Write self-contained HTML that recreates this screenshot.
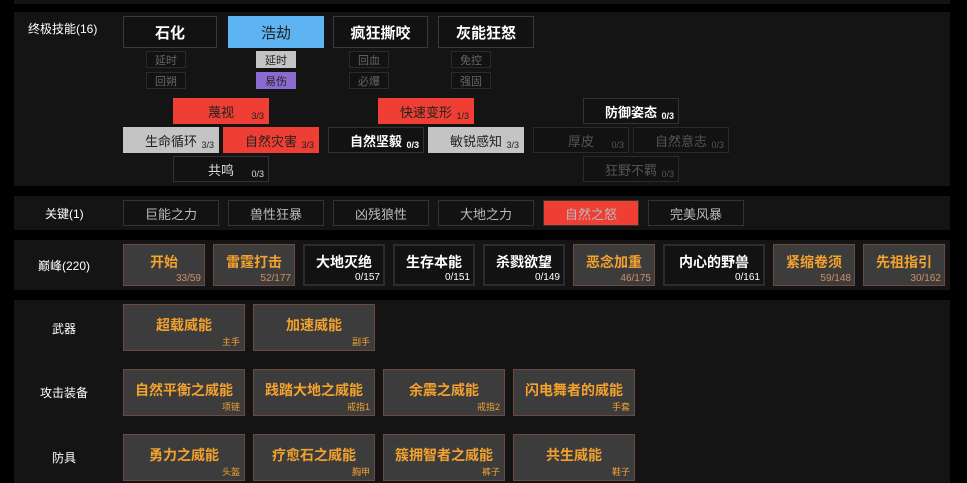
<!DOCTYPE html><html><head><meta charset="utf-8"><style>
*{margin:0;padding:0;box-sizing:border-box}
body{width:967px;height:483px;background:#000;position:relative;overflow:hidden;font-family:"Liberation Sans","Noto Sans CJK SC",sans-serif;color:#fff}
.p{position:absolute;left:14px;width:936px;background:#141414}
.b{position:absolute;display:flex;align-items:center;justify-content:center;font-size:13px;border:1px solid #333;background:#121212}
.lab{position:absolute;font-size:12px;color:#fff}
.u{font-size:15px;font-weight:bold;border:1px solid #3a3a3a}
.s{font-size:11px;color:#666;border:1px solid #2a2a2a;width:40px;height:17px}
.t{width:96px;height:26px;font-size:13px}
.t i{position:absolute;right:4px;bottom:2px;font-style:normal;font-size:9px}
.red{background:#ef3e33;border-color:#ef3e33;color:#222}
.gray{background:#c4c4c4;border-color:#c4c4c4;color:#222}
.dim{color:#555;border-color:#2a2a2a}
.k{width:96px;height:26px;font-size:13px;color:#bbb;border:1px solid #333}
.pk{top:244px;height:42px;width:82px;font-size:14px;font-weight:bold;padding-bottom:6px}
.pk i{position:absolute;right:3px;bottom:1px;font-style:normal;font-size:10px;font-weight:normal}
.o{background:#3c3c3c;border:1px solid #6d4a40;color:#f4a22e}
.o i{color:#d09060}
.d{background:#121212;border:2px solid #2c2c2c;color:#fff}
.lg{width:122px;height:47px;font-size:14px;font-weight:bold;padding-bottom:6px}
.lg i{position:absolute;right:4px;bottom:2px;font-style:normal;font-size:9px;font-weight:normal;color:#f4a22e}
</style></head><body>
<div class="p" style="top:0;height:4px"></div>
<div class="p" style="top:12px;height:174px"></div>
<div class="p" style="top:196px;height:34px"></div>
<div class="p" style="top:240px;height:50px"></div>
<div class="p" style="top:300px;height:183px"></div>

<div class="lab" style="left:28px;top:20px">终极技能(16)</div>
<div class="b u" style="left:123px;top:16px;width:94px;height:32px">石化</div>
<div class="b u" style="left:228px;top:16px;width:96px;height:32px;background:#5eb3f2;border-color:#5eb3f2;color:#222;font-weight:normal">浩劫</div>
<div class="b u" style="left:333px;top:16px;width:95px;height:32px">疯狂撕咬</div>
<div class="b u" style="left:438px;top:16px;width:96px;height:32px">灰能狂怒</div>
<div class="b s" style="left:146px;top:51px">延时</div><div class="b s" style="left:146px;top:72px">回朔</div>
<div class="b s" style="left:256px;top:51px;background:#c4c4c4;color:#222;border-color:#c4c4c4">延时</div><div class="b s" style="left:256px;top:72px;background:#8b6bd0;color:#222;border-color:#8b6bd0">易伤</div>
<div class="b s" style="left:349px;top:51px">回血</div><div class="b s" style="left:349px;top:72px">必爆</div>
<div class="b s" style="left:451px;top:51px">免控</div><div class="b s" style="left:451px;top:72px">强固</div>

<div class="b t red" style="left:173px;top:98px">蔑视<i>3/3</i></div>
<div class="b t gray" style="left:123px;top:127px">生命循环<i>3/3</i></div>
<div class="b t red" style="left:223px;top:127px">自然灾害<i>3/3</i></div>
<div class="b t" style="left:173px;top:156px;color:#ddd">共鸣<i>0/3</i></div>
<div class="b t red" style="left:378px;top:98px">快速变形<i>1/3</i></div>
<div class="b t" style="left:328px;top:127px;font-weight:bold">自然坚毅<i>0/3</i></div>
<div class="b t gray" style="left:428px;top:127px">敏锐感知<i>3/3</i></div>
<div class="b t" style="left:583px;top:98px;font-weight:bold">防御姿态<i>0/3</i></div>
<div class="b t dim" style="left:533px;top:127px">厚皮<i>0/3</i></div>
<div class="b t dim" style="left:633px;top:127px">自然意志<i>0/3</i></div>
<div class="b t dim" style="left:583px;top:156px">狂野不羁<i>0/3</i></div>

<div class="lab" style="left:45px;top:205px">关键(1)</div>
<div class="b k" style="left:123px;top:200px">巨能之力</div>
<div class="b k" style="left:228px;top:200px">兽性狂暴</div>
<div class="b k" style="left:333px;top:200px">凶残狼性</div>
<div class="b k" style="left:438px;top:200px">大地之力</div>
<div class="b k red" style="left:543px;top:200px">自然之怒</div>
<div class="b k" style="left:648px;top:200px">完美风暴</div>

<div class="lab" style="left:38px;top:257px">巅峰(220)</div>
<div class="b pk o" style="left:123px">开始<i>33/59</i></div>
<div class="b pk o" style="left:213px">雷霆打击<i>52/177</i></div>
<div class="b pk d" style="left:303px">大地灭绝<i>0/157</i></div>
<div class="b pk d" style="left:393px">生存本能<i>0/151</i></div>
<div class="b pk d" style="left:483px">杀戮欲望<i>0/149</i></div>
<div class="b pk o" style="left:573px">恶念加重<i>46/175</i></div>
<div class="b pk d" style="left:663px;width:102px">内心的野兽<i>0/161</i></div>
<div class="b pk o" style="left:773px">紧缩卷须<i>59/148</i></div>
<div class="b pk o" style="left:863px">先祖指引<i>30/162</i></div>

<div class="lab" style="left:52px;top:320px">武器</div>
<div class="lab" style="left:40px;top:384px">攻击装备</div>
<div class="lab" style="left:52px;top:449px">防具</div>
<div class="b lg o" style="left:123px;top:304px">超载威能<i>主手</i></div>
<div class="b lg o" style="left:253px;top:304px">加速威能<i>副手</i></div>
<div class="b lg o" style="left:123px;top:369px">自然平衡之威能<i>项链</i></div>
<div class="b lg o" style="left:253px;top:369px">践踏大地之威能<i>戒指1</i></div>
<div class="b lg o" style="left:383px;top:369px">余震之威能<i>戒指2</i></div>
<div class="b lg o" style="left:513px;top:369px">闪电舞者的威能<i>手套</i></div>
<div class="b lg o" style="left:123px;top:434px">勇力之威能<i>头盔</i></div>
<div class="b lg o" style="left:253px;top:434px">疗愈石之威能<i>胸甲</i></div>
<div class="b lg o" style="left:383px;top:434px">簇拥智者之威能<i>裤子</i></div>
<div class="b lg o" style="left:513px;top:434px">共生威能<i>鞋子</i></div>
</body></html>
